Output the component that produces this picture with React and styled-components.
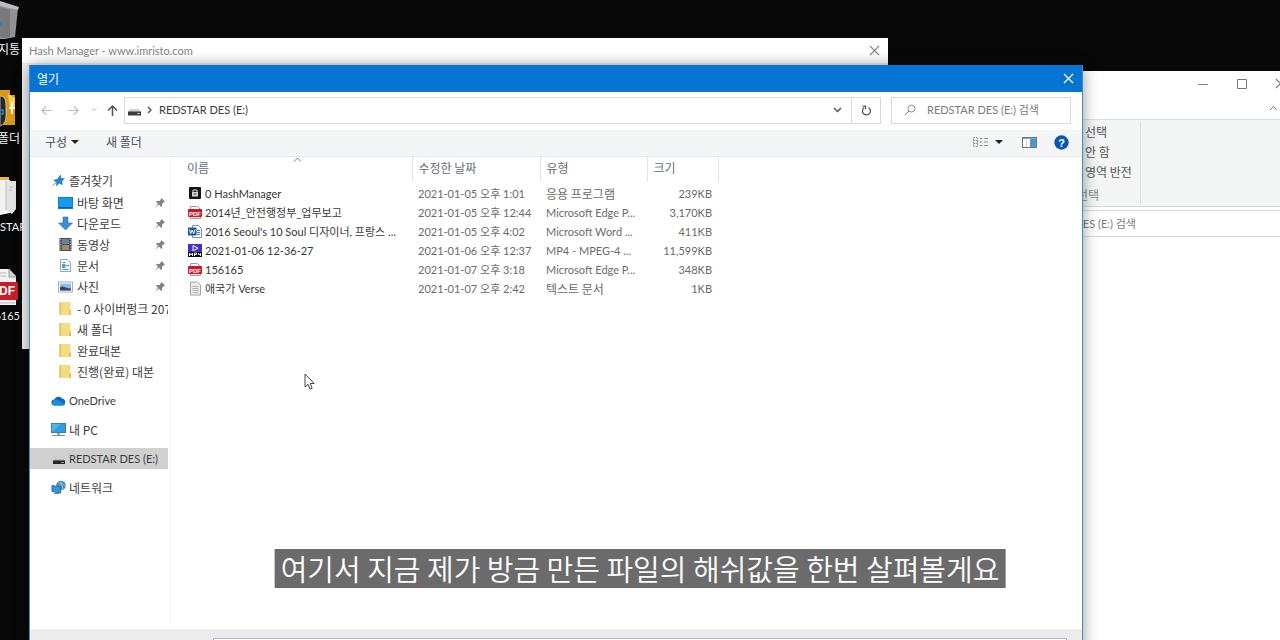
import React from "react";
import styled, { createGlobalStyle, css } from "styled-components";

const Global = createGlobalStyle`
  * { box-sizing: border-box; }
  html, body { margin: 0; background: #080808; }
  body, button, input, table {
    font-family: "Noto Sans CJK KR", "Noto Sans", sans-serif;
    font-size: 12px;
    line-height: 16px;
    color: #3c3c3c;
  }
  button { background: none; border: 0; padding: 0; cursor: default; }
  a { color: inherit; text-decoration: none; cursor: default; }
  svg { display: block; flex: none; }
`;

const latin = css`
  font-family: Lato, "Noto Sans CJK KR", sans-serif;
  font-size: 11px;
`;

const Desktop = styled.main`
  position: relative;
  height: 100vh;
  min-height: 400px;
  overflow: hidden;
  background: #080808;
`;

/* ---------- desktop shortcuts ---------- */
const Shortcuts = styled.nav`
  position: absolute;
  left: 0;
  top: -31px;
  width: 24px;
  display: flex;
  flex-direction: column;
  overflow: hidden;
`;
const Shortcut = styled.a`
  ${(p) => p.$latin && latin}
  height: 89px;
  display: flex;
  flex-direction: column;
  justify-content: flex-end;
  align-items: ${(p) => (p.$start ? "flex-start" : "flex-end")};
  gap: 2px;
  padding: 0 4px 1px 0;
  color: #f2f2f2;
  white-space: nowrap;
`;

/* ---------- windows ---------- */
const Win = styled.section`
  position: absolute;
  background: #fff;
  display: flex;
  flex-direction: column;
`;
const HashWindow = styled(Win)`
  left: 22px;
  right: 392px;
  top: 38px;
  height: 311px;
  background: #eef1f3;
`;
const ExplorerWindow = styled(Win)`
  right: -20px;
  width: 50%;
  top: 71px;
  bottom: 0;
`;
const Dialog = styled(Win)`
  left: 29px;
  right: 197px;
  top: 65px;
  bottom: -40px;
  border: 1px solid #3f8fcf;
  border-top: 0;
  box-shadow: 0 1px 14px rgba(0, 0, 0, 0.42);
`;

const TitleBar = styled.header`
  display: flex;
  align-items: center;
  justify-content: space-between;
  flex: none;
  height: ${(p) => (p.$active ? 27 : 25)}px;
  padding: 0 8px 0 7px;
  background: ${(p) => (p.$active ? "#0574d3" : "#fff")};
`;
const Title = styled.h1`
  margin: 0;
  font-size: 12px;
  font-weight: 400;
  line-height: 16px;
  color: ${(p) => (p.$active ? "#fff" : "#858585")};
  ${(p) => p.$latin && latin}
`;

const Controls = styled.div`
  display: flex;
  justify-content: flex-end;
  height: 25px;
  flex: none;
`;
const ControlButton = styled.button`
  width: 39px;
  display: grid;
  place-items: center;
`;
const RibbonToggle = styled.div`
  display: flex;
  justify-content: flex-end;
  align-items: center;
  height: 23px;
  padding-right: 22px;
  flex: none;
`;
const Ribbon = styled.div`
  display: flex;
  justify-content: flex-end;
  height: 88px;
  padding: 2px 159px 2px 0;
  background: #f4f5f5;
  border-top: 1px solid #dcdcdc;
  border-bottom: 1px solid #d6d6d6;
  flex: none;
`;
const RibbonGroup = styled.div`
  display: flex;
  flex-direction: column;
  width: 64px;
  padding-left: 8px;
  border-right: 1px solid #dedede;
`;
const RibbonButton = styled.button`
  height: 20px;
  text-align: left;
  white-space: nowrap;
  color: #555;
`;
const RibbonCaption = styled.span`
  margin: 5px 0 0 -8px;
  color: #8a8a8a;
`;
const ExplorerSearch = styled.label`
  display: flex;
  justify-content: flex-end;
  height: 27px;
  margin-top: 3px;
  border-top: 1px solid #d6d6d6;
  border-bottom: 1px solid #d6d6d6;
  flex: none;
`;
const SearchInput = styled.input`
  ${latin}
  border: 0;
  padding: 0;
  outline: 0;
  background: transparent;
  min-width: 0;
  width: ${(p) => p.$width || "100%"};
  color: #858585;
  &::placeholder {
    color: #7c7c7c;
    opacity: 1;
  }
`;

/* ---------- dialog navigation ---------- */
const NavRow = styled.div`
  display: flex;
  align-items: center;
  height: 38px;
  padding: 0 11px 2px 3px;
  flex: none;
`;
const NavButton = styled.button`
  width: ${(p) => p.$width}px;
  height: 26px;
  display: grid;
  place-items: center;
`;
const AddressBar = styled.div`
  flex: 1;
  min-width: 0;
  height: 27px;
  display: flex;
  align-items: center;
  border: 1px solid #d9d9d9;
  padding-left: 2px;
`;
const CrumbArrow = styled.span`
  margin-left: 5px;
`;
const Crumb = styled.button`
  ${latin}
  margin-left: 7px;
  margin-right: auto;
  white-space: nowrap;
`;
const RefreshButton = styled(NavButton)`
  border-left: 1px solid #d9d9d9;
`;
const SearchBox = styled.label`
  display: flex;
  align-items: center;
  gap: 11px;
  width: 180px;
  height: 27px;
  margin-left: 10px;
  padding-left: 12px;
  border: 1px solid #d9d9d9;
`;

const Toolbar = styled.div`
  display: flex;
  align-items: center;
  height: 27px;
  padding: 0 13px 2px 15px;
  background: #f3f5f6;
  border-bottom: 1px solid #e6e8e9;
  flex: none;
`;
const ToolButton = styled.button`
  display: flex;
  align-items: center;
  gap: 4px;
  margin-left: ${(p) => p.$before || 0}px;
  color: #4a4f5c;
`;
const Spacer = styled.span`
  flex: 1;
`;

/* ---------- dialog body ---------- */
const Body = styled.div`
  flex: 1;
  min-height: 0;
  display: grid;
  grid-template-columns: 141px minmax(0, 1fr);
`;
const Sidebar = styled.nav`
  display: flex;
  flex-direction: column;
  gap: 8px;
  padding: 13px 2px 0 0;
  margin-bottom: 6px;
  border-right: 1px solid #f3f3f3;
`;
const Tree = styled.div`
  display: flex;
  flex-direction: column;
  gap: 1px;
`;
const List = styled.ul`
  margin: 0;
  padding: 0;
  list-style: none;
`;
const TreeItem = styled.a`
  ${(p) => p.$latin && latin}
  display: flex;
  align-items: center;
  height: 21px;
  gap: ${(p) => (p.$child ? 4 : 3)}px;
  padding-left: ${(p) => (p.$child ? 28 : 21)}px;
  padding-right: ${(p) => (p.$flush ? 0 : 2)}px;
  background: ${(p) => (p.$selected ? "#d0d0d0" : "transparent")};
`;
const TreeLabel = styled.span`
  flex: 1;
  min-width: 0;
  overflow: hidden;
  white-space: nowrap;
`;

const FileTable = styled.table`
  width: 547px;
  table-layout: fixed;
  border-collapse: collapse;
  align-self: start;
`;
const HeadCell = styled.th`
  position: relative;
  width: ${(p) => p.$width}px;
  height: 25px;
  padding: 0 0 4px ${(p) => p.$pad}px;
  text-align: left;
  font-weight: 400;
  color: #666c78;
  border-right: 1px solid #e4e4e4;
`;
const SortMark = styled.span`
  position: absolute;
  left: 122px;
  top: 0;
`;
const Cell = styled.td`
  height: 19px;
  padding: 0 ${(p) => (p.$right ? 6 : 4)}px 0 6px;
  color: #6a6a6a;
  white-space: nowrap;
  overflow: hidden;
  text-overflow: ellipsis;
  text-align: ${(p) => (p.$right ? "right" : "left")};
  ${(p) => !p.$korean && latin}
`;
const GapRow = styled.tr`
  height: 2px;
`;
const FileName = styled.div`
  display: flex;
  align-items: center;
  gap: 3px;
  padding-left: 11px;
  color: #383838;
`;

const Footer = styled.footer`
  height: 50px;
  padding: 9px 15px 0 183px;
  background: #ececec;
  flex: none;
`;
const FileField = styled.input`
  display: block;
  width: 100%;
  height: 24px;
  border: 1px solid #a3bdd3;
  background: #fff;
`;

const Subtitle = styled.p`
  position: absolute;
  left: 50%;
  bottom: 52px;
  transform: translateX(-50%);
  margin: 0;
  padding: 0 6px 1px;
  background: #6b6b6b;
  color: #fff;
  font-size: 29px;
  font-weight: 350;
  line-height: 38px;
  white-space: nowrap;
`;
const Pointer = styled.svg`
  position: absolute;
  left: 304px;
  top: 373px;
`;

/* ---------- icons ---------- */
const Stroke = ({ w, h, d, color = "#666", sw = 1 }) => (
  <svg width={w} height={h} viewBox={`0 0 ${w} ${h}`} fill="none" stroke={color} strokeWidth={sw}>
    <path d={d} />
  </svg>
);
const Close = ({ color }) => <Stroke w={11} h={11} d="M1 1 10 10M10 1 1 10" color={color} sw={1.2} />;
const Down = () => (
  <svg width="8" height="4" viewBox="0 0 8 4">
    <path d="M0 0h8L4 4z" fill="#222" />
  </svg>
);
const Ic = ({ children, w = 15, h = 15 }) => (
  <svg width={w} height={h} viewBox={`0 0 ${w} ${h}`}>{children}</svg>
);
const Drive = () => (
  <Ic>
    <path d="M3 6h9l2 3H1z" fill="#cfcfcf" />
    <rect x="1" y="8.500" width="13" height="4" fill="#3a3a3a" />
    <rect x="10" y="10" width="3" height="1" fill="#bbb" />
  </Ic>
);
const SideDrive = () => (
  <Ic>
    <path d="M3 8.500h10l1 1.500H2z" fill="#aaa" />
    <rect x="2" y="9.500" width="12" height="3.500" fill="#262626" />
    <rect x="10" y="11" width="3" height="1" fill="#999" />
  </Ic>
);
const Star = () => (
  <Ic>
    <path d="M9.500 1.500 10.500 5l3.700.6-3 2.500.6 4.200-3.600-1.700L5 13.500l.3-4L2 7l4.200-1z" fill="#2b86c8" />
    <path d="M1.500 12.500 6 9" stroke="#5d9dca" />
  </Ic>
);
const DesktopIcon = () => (
  <Ic>
    <rect x=".5" y="2.500" width="14" height="11" fill="#149df0" stroke="#1679bd" />
    <path d="M1 12.500h13" stroke="#0b5f9c" />
  </Ic>
);
const Download = () => (
  <Ic>
    <path d="M5 1h5v6h4.500l-7 7-7-7H5z" fill="#3a8fd0" stroke="#2873b0" strokeWidth=".6" />
  </Ic>
);
const Video = () => (
  <Ic>
    <rect x="1.500" y="1" width="12" height="13" fill="#4b4b53" />
    <rect x="4" y="2" width="7" height="5" fill="#6e7fa6" />
    <rect x="4" y="8" width="7" height="5" fill="#9b8d60" />
    <path d="M2.700 2v11M12.300 2v11" stroke="#d6d6d6" strokeDasharray="1 1.500" />
  </Ic>
);
const Doc = () => (
  <Ic>
    <path d="M2.500 1.500h7l3 3v9h-10z" fill="#f7fbfe" stroke="#9aa7b0" />
    <path d="M4.500 4.500h3M4.500 11.500h6M8 7.500h3" stroke="#4b8fc4" />
    <rect x="4" y="6" width="3.500" height="4" fill="#4aa0d8" />
  </Ic>
);
const Photo = () => (
  <Ic>
    <rect x=".5" y="3" width="14" height="10" fill="#fff" stroke="#a5adb3" />
    <rect x="2" y="4.500" width="11" height="7" fill="#8cbde3" />
    <path d="M2 8.500c3-3 5 1 11 1v2H2z" fill="#33485c" />
  </Ic>
);
const Folder = () => (
  <Ic>
    <path d="M1.500 1h11v13h-11z" fill="#f4dc84" />
    <path d="M1.500 1H3v13H1.500zM11 9.500h2V14h-2V9.500z" fill="#e2bf59" />
  </Ic>
);
const Cloud = () => (
  <Ic>
    <path d="M3.500 12.500a3 3 0 0 1-.2-6A4.500 4.500 0 0 1 11 5.500a3.600 3.600 0 0 1 .8 7z" fill="#0f6cbd" />
    <path d="M3 7c3-1 5 1 11 4.500a3 3 0 0 1-2 1H3.500A3 3 0 0 1 1 10z" fill="#1f8ee0" />
  </Ic>
);
const Pc = () => (
  <Ic>
    <rect x=".5" y="1.500" width="14" height="9" fill="#4eb4ee" stroke="#4b7894" />
    <path d="M1 10 10 2h4v8z" fill="#2f9be0" />
    <path d="M6 11h3v2H6z" fill="#93a5b0" />
    <path d="M1 13.500h13" stroke="#7c93a1" />
  </Ic>
);
const Network = () => (
  <Ic>
    <circle cx="10" cy="5.500" r="4.800" fill="#4c91b4" />
    <path d="M7 2c2 2 5 1 7 4M10 1c-1 3 2 5 2 9" stroke="#a9d3e6" fill="none" strokeWidth=".8" />
    <path d="M1 5.500 9.500 7v6L1 11.500z" fill="#2e9be6" stroke="#2c6d9b" />
    <path d="M3 13.500h5" stroke="#6a8698" />
  </Ic>
);
const Pin = () => (
  <svg width="12" height="12" viewBox="0 0 12 12">
    <path d="m7.500 1 3.500 3.500-1 .5-1.800 1.600-.2 2.700-.8.700L4.800 7.600 1 11l2.900-4.300L2 4.800l.8-.7 2.700-.2L7 2z" fill="#7d858c" />
  </svg>
);
const HashIcon = () => (
  <Ic w={14}>
    <rect x="1" y="1" width="12" height="12" rx="1" fill="#161616" />
    <path d="M5 6V4h4v2" stroke="#ddd" fill="none" />
    <rect x="4" y="6" width="6" height="4.500" fill="#d9d9d9" />
    <rect x="5.500" y="7.500" width="3" height="1" fill="#333" />
  </Ic>
);
const Badge = styled.text`
  font-family: "Liberation Sans", sans-serif;
  font-weight: 700;
  fill: #fff;
`;
const Pdf = () => (
  <Ic w={14}>
    <path d="M2.500 1.500h7l3 3v9h-10z" fill="#fff" stroke="#c98a8e" />
    <rect x="0" y="4" width="14" height="8" rx="1" fill="#cc1526" />
    <Badge x="1" y="10.500" fontSize="6">PDF</Badge>
  </Ic>
);
const Word = () => (
  <Ic w={14}>
    <path d="M4.500 1.500h6l3 3v9h-9z" fill="#fff" stroke="#7d8fae" />
    <path d="M9 6.500h3M9 8.500h3M9 10.500h3" stroke="#4d74b5" />
    <rect x="0" y="3.500" width="8.500" height="8" fill="#2258a8" />
    <path d="m1.500 5.500 1.200 4 1.500-3.500 1.500 3.500L7 5.500" fill="none" stroke="#fff" />
  </Ic>
);
const Mp4 = () => (
  <Ic w={14}>
    <rect width="14" height="9" y="1" fill="#4532bd" />
    <path d="M5 2.500 10 5.200 5 7.800z" fill="none" stroke="#fff" />
    <rect width="14" height="5" y="9" fill="#101018" />
    <path d="M1.500 13V10l1.500 2 1.500-2v3M6.500 13v-3h2v1.500h-2M10.500 10v1.500h2.500M12.500 10v3" fill="none" stroke="#fff" strokeWidth=".9" />
  </Ic>
);
const Txt = () => (
  <Ic w={14}>
    <path d="M2.500 1h7l3 3v10h-10z" fill="#ededed" stroke="#a3a3a3" />
    <path d="M4.500 5.500h6M4.500 7.500h6M4.500 9.500h6M4.500 11.500h6" stroke="#b5b5b5" />
  </Ic>
);

const BinArt = () => (
  <svg width="20" height="38" viewBox="0 0 20 38">
    <path d="M0 2 18 7 15 36 5 38H0z" fill="#8f9192" />
    <path d="M0 0 19 6 18 9 0 5z" fill="#b9bcbd" />
    <path d="M0 6 10 9v27l-5 1-5-1z" fill="#77797a" />
    <circle cx="0" cy="23" r="2" fill="#2b7fc0" />
  </svg>
);
const LockArt = () => (
  <svg width="20" height="38" viewBox="0 0 20 38">
    <path d="M0 0h10v5h5v30H0z" fill="#d99a18" />
    <path d="M8 4 15 8v10l-5 2z" fill="#f6cf57" />
    <path d="M12 12v12M9 18h6" stroke="#fff5cf" strokeWidth="2" />
    <path d="M0 6c6 0 6 6 6 13s1 15-6 17z" fill="#25282c" stroke="#eee3bd" strokeWidth=".7" />
    <path d="M0 20h3v4H0" fill="none" stroke="#2f86bf" strokeWidth="1.500" />
  </svg>
);
const FolderArt = () => (
  <svg width="20" height="40" viewBox="0 0 20 40">
    <path d="M0 0h9v5H0z" fill="#e9b64c" />
    <path d="M0 3h10v33L0 38z" fill="#f3f3f3" />
    <path d="M6 4h10v28l-4 5-6-4z" fill="#e3e3e3" />
    <path d="M6 4v29M9 10h4M9 13h3" stroke="#bcbcbc" />
  </svg>
);
const PdfArt = () => (
  <svg width="20" height="38" viewBox="0 0 20 38">
    <path d="M0 1h9l7 7v29H0z" fill="#f2f2f2" />
    <path d="M9 1v8h7" fill="#d4d4d4" stroke="#999" />
    <path d="M0 5h6M0 8h6M0 35h15" stroke="#bdbdbd" />
    <rect y="14" width="18" height="18" fill="#c91d28" />
    <Badge x="-9" y="27" fontSize="12">PDF</Badge>
  </svg>
);

/* ---------- data ---------- */
const pinned = [
  ["바탕 화면", DesktopIcon],
  ["다운로드", Download],
  ["동영상", Video],
  ["문서", Doc],
  ["사진", Photo],
];
const folders = ["- 0 사이버펑크 2077", "새 폴더", "완료대본", "진행(완료) 대본"];
const roots = [
  ["OneDrive", Cloud, true],
  ["내 PC", Pc, false],
  ["REDSTAR DES (E:)", SideDrive, true],
  ["네트워크", Network, false],
];
const files = [
  [HashIcon, "0 HashManager", "2021-01-05 오후 1:01", "응용 프로그램", "239KB"],
  [Pdf, "2014년_안전행정부_업무보고", "2021-01-05 오후 12:44", "Microsoft Edge P...", "3,170KB"],
  [Word, "2016 Seoul's 10 Soul 디자이너, 프랑스 ...", "2021-01-05 오후 4:02", "Microsoft Word ...", "411KB"],
  [Mp4, "2021-01-06 12-36-27", "2021-01-06 오후 12:37", "MP4 - MPEG-4 ...", "11,599KB"],
  [Pdf, "156165", "2021-01-07 오후 3:18", "Microsoft Edge P...", "348KB"],
  [Txt, "애국가 Verse", "2021-01-07 오후 2:42", "텍스트 문서", "1KB"],
];

export default function App() {
  return (
    <Desktop>
      <Global />
      <Shortcuts>
        <Shortcut href="#"><BinArt />휴지통</Shortcut>
        <Shortcut href="#"><LockArt />폴더</Shortcut>
        <Shortcut href="#" $start $latin><FolderArt />STAR</Shortcut>
        <Shortcut href="#" $latin><PdfArt />156165</Shortcut>
      </Shortcuts>

      <ExplorerWindow>
        <Controls>
          <ControlButton aria-label="최소화"><Stroke w={10} h={10} d="M0 5.5h10" color="#888" /></ControlButton>
          <ControlButton aria-label="최대화"><Stroke w={10} h={10} d="M.5.5h9v9h-9z" color="#777" /></ControlButton>
          <ControlButton aria-label="닫기"><Close color="#777" /></ControlButton>
        </Controls>
        <RibbonToggle><Stroke w={9} h={6} d="M1 5 4.500 1.500 8 5" color="#777" /></RibbonToggle>
        <Ribbon>
          <RibbonGroup>
            <RibbonButton>선택</RibbonButton>
            <RibbonButton>안 함</RibbonButton>
            <RibbonButton>영역 반전</RibbonButton>
            <RibbonCaption>선택</RibbonCaption>
          </RibbonGroup>
        </Ribbon>
        <ExplorerSearch>
          <SearchInput $width="276px" aria-label="탐색기 검색" placeholder="REDSTAR DES (E:) 검색" />
        </ExplorerSearch>
      </ExplorerWindow>

      <HashWindow>
        <TitleBar>
          <Title $latin>Hash Manager - www.imristo.com</Title>
          <button aria-label="닫기"><Close color="#888" /></button>
        </TitleBar>
      </HashWindow>

      <Dialog role="dialog" aria-label="열기">
        <TitleBar $active>
          <Title as="h2" $active>열기</Title>
          <button aria-label="닫기"><Close color="#fff" /></button>
        </TitleBar>

        <NavRow>
          <NavButton $width={27} aria-label="뒤로"><Stroke w={11} h={9} d="M11 4.500H1M5 .5l-4 4 4 4" color="#bcbcbc" sw={1.2} /></NavButton>
          <NavButton $width={27} aria-label="앞으로"><Stroke w={11} h={9} d="M0 4.500h10M6 .5l4 4-4 4" color="#bcbcbc" sw={1.2} /></NavButton>
          <NavButton $width={14} aria-label="최근 위치"><Stroke w={5} h={4} d="M.5.5l2 2 2-2" color="#bbb" /></NavButton>
          <NavButton $width={23} aria-label="위로"><Stroke w={11} h={11} d="M5.500 11V1.500M1 5.500l4.500-4.500L10 5.500" color="#555" sw={1.5} /></NavButton>
          <AddressBar>
            <Drive />
            <CrumbArrow><Stroke w={5} h={8} d="M1 1l3 3-3 3" color="#555" sw={1.5} /></CrumbArrow>
            <Crumb>REDSTAR DES (E:)</Crumb>
            <NavButton $width={28} aria-label="이전 위치"><Stroke w={9} h={6} d="M1 1l3.500 3.500L8 1" color="#555" sw={1.5} /></NavButton>
            <RefreshButton $width={29} aria-label="새로 고침">
              <svg width="11" height="11" viewBox="0 0 11 11" fill="none" stroke="#555" strokeWidth="1.3">
                <path d="M7.500 2.500A4 4 0 1 1 3 2.800M1.500 1.200h3v3" />
              </svg>
            </RefreshButton>
          </AddressBar>
          <SearchBox>
            <svg width="12" height="12" viewBox="0 0 12 12" fill="none" stroke="#8a8a8a">
              <circle cx="7.500" cy="4.500" r="3.500" />
              <path d="M5 7 .8 11.200" />
            </svg>
            <SearchInput aria-label="검색" placeholder="REDSTAR DES (E:) 검색" />
          </SearchBox>
        </NavRow>

        <Toolbar>
          <ToolButton>구성 <Down /></ToolButton>
          <ToolButton $before={27}>새 폴더</ToolButton>
          <Spacer />
          <ToolButton aria-label="보기">
            <svg width="15" height="11" viewBox="0 0 15 11" fill="none" stroke="#8d9196">
              <path d="M.5.5h4v3h-4zM.5 3.500h4v3h-4zM.5 6.500h4v3h-4z" strokeDasharray="1.500 .8" />
              <path d="M6.500 1.500h3M11 1.500h4M6.500 5h3M11 5h4M6.500 8.500h3M11 8.500h4" />
            </svg>
          </ToolButton>
          <ToolButton $before={7} aria-label="보기 옵션"><Down /></ToolButton>
          <ToolButton $before={19} aria-label="미리 보기 창">
            <svg width="15" height="11" viewBox="0 0 15 11">
              <rect x=".5" y=".5" width="14" height="10" fill="#fff" stroke="#6d7a86" />
              <path d="M1 1.500h13" stroke="#7ba5c8" />
              <rect x="8" y="2" width="6" height="8" fill="#4a98d2" />
              <path d="M4.500 2v8" stroke="#d5d5d5" />
            </svg>
          </ToolButton>
          <ToolButton $before={17} aria-label="도움말">
            <svg width="15" height="15" viewBox="0 0 15 15">
              <circle cx="7.500" cy="7.500" r="7.200" fill="#0b55ae" />
              <Badge x="4.300" y="11.500" fontSize="11">?</Badge>
            </svg>
          </ToolButton>
        </Toolbar>

        <Body>
          <Sidebar>
            <Tree>
              <TreeItem href="#"><Star /><TreeLabel>즐겨찾기</TreeLabel></TreeItem>
              <List>
                {pinned.map(([name, Icon]) => (
                  <li key={name}>
                    <TreeItem href="#" $child><Icon /><TreeLabel>{name}</TreeLabel><Pin /></TreeItem>
                  </li>
                ))}
              </List>
              <List>
                {folders.map((name) => (
                  <li key={name}>
                    <TreeItem href="#" $child $flush><Folder /><TreeLabel>{name}</TreeLabel></TreeItem>
                  </li>
                ))}
              </List>
            </Tree>
            {roots.map(([name, Icon, isLatin]) => (
              <TreeItem href="#" key={name} $latin={isLatin} $selected={name.startsWith("RED")}>
                <Icon /><TreeLabel>{name}</TreeLabel>
              </TreeItem>
            ))}
          </Sidebar>

          <FileTable>
            <thead>
              <tr>
                <HeadCell $width={241} $pad={16}>
                  이름
                  <SortMark><Stroke w={9} h={5} d="M1 4.500 4.500 1 8 4.500" color="#777" /></SortMark>
                </HeadCell>
                <HeadCell $width={128} $pad={6}>수정한 날짜</HeadCell>
                <HeadCell $width={107} $pad={6}>유형</HeadCell>
                <HeadCell $width={71} $pad={6}>크기</HeadCell>
              </tr>
            </thead>
            <tbody>
              <GapRow aria-hidden="true" />
              {files.map(([Icon, name, date, type, size]) => (
                <tr key={name}>
                  <Cell><FileName><Icon /><span>{name}</span></FileName></Cell>
                  <Cell>{date}</Cell>
                  <Cell $korean={!/[A-Z]/.test(type)}>{type}</Cell>
                  <Cell $right>{size}</Cell>
                </tr>
              ))}
            </tbody>
          </FileTable>
        </Body>

        <Footer><FileField aria-label="파일 이름" /></Footer>
      </Dialog>

      <Pointer width="12" height="18" viewBox="0 0 12 18">
        <path d="M1 1v13l3-2.800 2 5 2.200-1-2-4.700h4z" fill="#fff" stroke="#444" />
      </Pointer>
      <Subtitle>여기서 지금 제가 방금 만든 파일의 해쉬값을 한번 살펴볼게요</Subtitle>
    </Desktop>
  );
}
